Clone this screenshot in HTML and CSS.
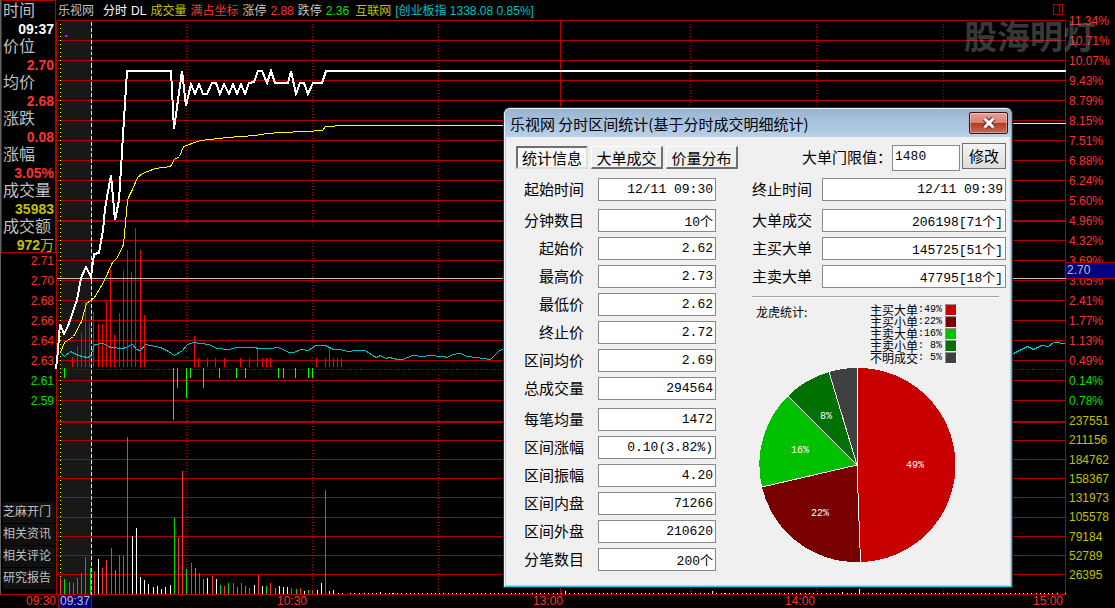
FILE: index.html
```
<!DOCTYPE html>
<html lang="zh-CN">
<head>
<meta charset="utf-8">
<title>乐视网 分时</title>
<link rel="stylesheet" href="styles.css">
</head>
<body>
<div class="terminal">
  <aside class="side">
    <dl class="quote">
      <dt>时间</dt><dd class="white">09:37</dd>
      <dt>价位</dt><dd>2.70</dd>
      <dt>均价</dt><dd>2.68</dd>
      <dt>涨跌</dt><dd>0.08</dd>
      <dt>涨幅</dt><dd>3.05%</dd>
      <dt>成交量</dt><dd class="gold">35983</dd>
      <dt>成交额</dt><dd class="gold">972<span class="unit">万</span></dd>
    </dl>
    <ul class="scale scale-left">
      <li>2.71</li><li>2.70</li><li>2.68</li><li>2.66</li><li>2.64</li><li>2.63</li>
      <li class="green">2.61</li><li class="green">2.59</li>
    </ul>
    <nav class="links">
      <button type="button">芝麻开门</button>
      <button type="button">相关资讯</button>
      <button type="button">相关评论</button>
      <button type="button">研究报告</button>
    </nav>
  </aside>

  <header class="top">
    <span class="name">乐视网</span>
    <span class="white">分时</span>
    <span class="white">DL</span>
    <span class="gold">成交量</span>
    <span class="red">满占坐标</span>
    <span>涨停</span>
    <span class="red">2.88</span>
    <span>跌停</span>
    <span class="green">2.36</span>
    <span class="gold sector">互联网</span>
    <span class="cyan">[创业板指 1338.08 0.85%]</span>
    <svg class="split" width="11" height="12" viewBox="0 0 11 12" shape-rendering="crispEdges"><path d="M.5 .5H9.500V10.500H.5ZM6.500 .5V10.500" fill="none" stroke="#b00000"/></svg>
  </header>

  <main class="chart">
    <svg class="plot" viewBox="56 20 1010 575" preserveAspectRatio="none" shape-rendering="crispEdges">
      <rect x="61" y="21" width="30" height="573" fill="#181818"/>
      <g transform="translate(.5 .5)" fill="none">
        <g stroke="#b00000">
          <path d="M56 20H1065M56 40H1065M56 60H1065M56 80H1065M56 100H1065M56 120H1065M56 140H1065M56 160H1065M56 180H1065M56 200H1065M56 220H1065M56 221H1065M56 240H1065M56 260H1065M56 280H1065M56 300H1065M56 320H1065M56 340H1065M56 360H1065M56 380H1065M56 400H1065M56 421H1065M56 422H1065M56 440H1065M56 459H1065M56 478H1065M56 497H1065M56 517H1065M56 536H1065M56 555H1065M56 574H1065M56 594H1065"/>
          <path d="M56 20V594M1065 20V594M560 20V594"/>
          <path d="M56 369H1065M186 23V594M312 23V594M438 23V594M690 23V594M816 23V594M943 23V594" stroke-dasharray="1 2"/>
        </g>
        <path d="M60 23V594" stroke="#ffff00" stroke-dasharray="1 3"/>
        <path stroke="#ff0000" d="M72 366V356M77 366V345M81 366V331M85 366V300M89 366V322M93 366V311M98 366V323M102 366V323M106 366V301M110 366V268M114 366V334M119 366V312M123 366V269M127 366V249M131 366V271M135 366V227M140 366V249M144 366V314M194 366V335M198 366V357M207 366V357M215 366V357M224 366V357M240 366V357M249 366V357M257 366V346M262 366V357M266 366V357M270 366V357M316 366V357M325 366V357M329 366V346M333 366V357M337 366V357M341 366V357"/>
        <path stroke="#00ff00" d="M64 367V377M173 367V419M177 367V387M186 367V397M190 367V377M203 367V387M219 367V377M236 367V377M245 367V377M278 367V377M283 367V377M295 367V377M308 367V377M312 367V377"/>
        <path stroke="#ff3030" d="M60 594V577M69 594V581M73 594V582M77 594V577M81 594V572M85 594V556M94 594V570M102 594V567M106 594V559M111 594V547M119 594V554M123 594V555M127 594V436M178 594V537M182 594V470M191 594V562M199 594V572M212 594V575M224 594V585M233 594V582M241 594V582M249 594V587M258 594V574M270 594V582M291 594V587M300 594V587M312 594V589M325 594V489"/>
        <path stroke="#00e000" d="M64 594V578M90 594V567M115 594V569M174 594V517M186 594V568M195 594V567M203 594V578M220 594V584M228 594V582M237 594V586M245 594V585M266 594V585M275 594V587M296 594V588M308 594V589"/>
        <path stroke="#fff" d="M98 594V558M132 594V535M136 594V527M140 594V576M144 594V579M148 594V583M153 594V586M157 594V585M161 594V588M165 594V586M170 594V584M207 594V577M216 594V578M254 594V584M262 594V585M279 594V585M283 594V586M287 594V586M304 594V590M317 594V589M321 594V582M329 594V590M333 594V589M338 594V592M342 594V592M350 594V592M354 594V592M359 594V592M380 594V591M392 594V592M565 594V590M712 594V590M724 594V592M834 594V592M842 594V591M859 594V588M1065 594V592"/>
        <path stroke="#fff" stroke-dasharray="1 3 1 3 1 3 1 3 1 4" d="M363 593H1060"/>
        <path d="M56 594H1065" stroke="#b00000"/>
        <polyline stroke="#00c0c0" points="61,353 64,356 70,351 78,355 86,357 90,356 94,344 103,343 110,347 123,348 132,344 136,349 140,350 145,344 160,347 168,351 174,355 182,350 187,344 193,342 208,344 217,348 228,349 237,347 252,347 260,348 270,348 277,347 283,349 288,352 293,352 301,349 308,350 315,345 325,345 333,349 340,349 347,351 357,350 365,350 372,355 376,357 380,355 385,358 389,357 397,359 402,359 412,355 423,356 428,355 443,356 447,357 452,354 460,353 467,356 483,358 490,359 498,351 503,348 700,352 1000,358 1013,353 1027,346 1033,349 1041,345 1048,346 1053,342 1065,343"/>
        <polyline stroke="#ffff00" points="60,352 64,342 73,336 81,321 86,303 94,297 103,282 112,262 117,257 123,244 127,200 128,197 132,189 137,177 142,173 155,168 170,166 174,159 179,156 183,146 200,140 227,137 255,135 267,133 280,132 306,131 322,130 325,126 344,125 1000,125 1013,123 1065,123"/>
        <path d="M56 278H1065" stroke="#c0c0c0"/>
        <path d="M91 21V594" stroke="#2020c0"/>
        <path d="M91 21V594" stroke="#e0e0e0" stroke-dasharray="4 2"/>
      </g>
      <polyline fill="none" stroke="#fff" stroke-width="2" points="56,369 58,350 60,324 64,334 68,326 77,300 81,278 86,267 91,277 94,254 99,253 103,230 105,209 107,197 111,175 115,220 119,200 127,71 171,71 174,129 182,71 186,106 191,84 195,94 199,84 203,94 207,94 212,83 216,83 220,94 224,84 229,94 233,84 237,94 241,84 245,94 249,83 254,82 258,71 262,71 267,83 271,71 275,83 288,83 291,71 296,94 300,83 304,83 308,94 313,83 322,83 326,71 1066,71"/>
      <rect x="65" y="35" width="2" height="2" fill="#ff00ff"/>
    </svg>
  </main>

  <aside class="axis">
    <ul class="scale">
      <li>11.34%</li><li>10.71%</li><li>10.07%</li><li>9.43%</li><li>8.79%</li><li>8.15%</li><li>7.51%</li><li>6.88%</li><li>6.24%</li><li>5.60%</li><li>4.96%</li><li>4.32%</li><li>3.69%</li><li>3.05%</li><li>2.41%</li><li>1.77%</li><li>1.13%</li><li>0.49%</li><li class="green">0.14%</li><li class="green">0.78%</li>
    </ul>
    <ul class="volume">
      <li>237551</li><li>211156</li><li>184762</li><li>158367</li><li>131973</li><li>105578</li><li>79184</li><li>52789</li><li>26395</li>
    </ul>
    <div class="price-tag">2.70</div>
  </aside>

  <footer class="times">
    <span>09:30</span><span class="cursor-time">09:37</span><span>10:30</span><span>13:00</span><span>14:00</span><span>15:00</span>
  </footer>

  <div class="watermark">股海明灯</div>

  <section class="dialog" role="dialog" aria-labelledby="dialog-title">
    <div class="titlebar">
      <h1 id="dialog-title">乐视网 分时区间统计(基于分时成交明细统计)</h1>
      <button type="button" class="close" aria-label="关闭"><svg width="16" height="14" viewBox="0 0 16 14"><path d="M3.500 2.500L12.500 11.500M12.500 2.500L3.500 11.500" stroke="#5a3030" stroke-width="5"/><path d="M3.500 2.500L12.500 11.500M12.500 2.500L3.500 11.500" stroke="#fff" stroke-width="3"/></svg></button>
    </div>
    <div class="client">
      <div class="tools">
        <div class="tabs" role="tablist">
          <button type="button" role="tab" aria-selected="true" class="tab active">统计信息</button>
          <button type="button" role="tab" class="tab">大单成交</button>
          <button type="button" role="tab" class="tab">价量分布</button>
        </div>
        <form class="limit">
          <label for="limit">大单门限值：</label>
          <input id="limit" value="1480">
          <button type="button">修改</button>
        </form>
      </div>
      <div class="columns">
        <div class="groups">
          <div class="group">
            <label class="row">起始时间<input readonly value="12/11 09:30"></label>
          </div>
          <div class="group">
            <label class="row">分钟数目<input readonly value="10个"></label>
            <label class="row">起始价<input readonly value="2.62"></label>
            <label class="row">最高价<input readonly value="2.73"></label>
            <label class="row">最低价<input readonly value="2.62"></label>
            <label class="row">终止价<input readonly value="2.72"></label>
            <label class="row">区间均价<input readonly value="2.69"></label>
            <label class="row">总成交量<input readonly value="294564"></label>
          </div>
          <div class="group">
            <label class="row">每笔均量<input readonly value="1472"></label>
            <label class="row">区间涨幅<input readonly value="0.10(3.82%)"></label>
            <label class="row">区间振幅<input readonly value="4.20"></label>
            <label class="row">区间内盘<input readonly value="71266"></label>
            <label class="row">区间外盘<input readonly value="210620"></label>
            <label class="row">分笔数目<input readonly value="200个"></label>
          </div>
        </div>
        <div class="right">
          <div class="groups wide">
            <div class="group">
              <label class="row">终止时间<input readonly value="12/11 09:39"></label>
            </div>
            <div class="group">
              <label class="row">大单成交<input readonly value="206198[71个]"></label>
              <label class="row">主买大单<input readonly value="145725[51个]"></label>
              <label class="row">主卖大单<input readonly value="47795[18个]"></label>
            </div>
          </div>
          <hr>
          <div class="summary">
            <h2>龙虎统计:</h2>
            <ul class="legend">
              <li>主买大单<b>:49%</b><i class="c1"></i></li>
              <li>主买小单<b>:22%</b><i class="c2"></i></li>
              <li>主卖大单<b>:16%</b><i class="c3"></i></li>
              <li>主卖小单<b>: 8%</b><i class="c4"></i></li>
              <li>不明成交<b>: 5%</b><i class="c5"></i></li>
            </ul>
          </div>
          <svg class="pie" width="196" height="196" viewBox="0 0 196 196">
            <g shape-rendering="crispEdges">
              <path fill="#c80000" d="M98 98V1A97 97 0 0 1 101 195Z"/>
              <path fill="#780000" d="M98 98L101 195A97 97 0 0 1 3 120Z"/>
              <path fill="#00c000" d="M98 98L3 120A97 97 0 0 1 29 29Z"/>
              <path fill="#007000" d="M98 98L29 29A97 97 0 0 1 70 5Z"/>
              <path fill="#404040" d="M98 98L70 5A97 97 0 0 1 98 1Z"/>
              <path d="M98.500 98V1M98 98L101.500 195M98 98L3 120M98 98L29 29M98 98L70 5" stroke="#fff" fill="none"/>
            </g>
            <g class="pie-text">
              <text x="156" y="101">49%</text>
              <text x="61" y="149">22%</text>
              <text x="41" y="86">16%</text>
              <text x="67" y="52">8%</text>
            </g>
          </svg>
        </div>
      </div>
    </div>
  </section>
</div>
</body>
</html>
```
FILE: styles.css
```
* { box-sizing: border-box; margin: 0; padding: 0; }
body { background: #000; color: #c0c0c0; font: 12px/18px "Liberation Sans", "Noto Sans CJK SC", sans-serif; }
ul { list-style: none; }
button, input { font: inherit; color: inherit; }

.terminal { position: relative; display: grid; grid-template-columns: 56px 1fr 49px; grid-template-rows: 20px 1fr 13px; min-height: 100vh; overflow: hidden; }
.white { color: #fff; }
.red { color: #ff3030; }
.gold { color: #c0c000; }
.cyan { color: #00c0c0; }

.side { grid-row: 1 / 3; display: flex; flex-direction: column; border-left: 1px solid #606060; border-bottom: 1px solid #b00000; }
.quote { border: 1px solid #b00000; height: 253px; padding-top: 1px; font-size: 16px; overflow: hidden; white-space: nowrap; }
.quote dt { padding-left: 1px; height: 18px; }
.quote dd { height: 18px; padding-right: 1px; text-align: right; font-size: 14px; font-weight: bold; color: #ff3030; }
.quote dd.white { color: #fff; }
.quote dd.gold { color: #c0c000; }
.unit { font-weight: normal; }
.scale { color: #ff3030; line-height: 20px; }
.scale .green, .green { color: #00e000; }
.scale-left { text-align: right; padding-right: 2px; margin-top: -2px; }
.links { margin-top: auto; padding: 0 1px 5px 2px; display: grid; gap: 1px; }
.links button { height: 21px; border: 0; background: #101010; text-align: left; line-height: 18px; padding-bottom: 2px; white-space: nowrap; }

.top { grid-column: 2 / 4; grid-row: 1; display: flex; gap: 4px; padding: 2px 51px 0 2px; line-height: 18px; white-space: nowrap; }
.name { margin-right: 5px; }
.sector { margin-left: 2px; }
.split { margin: 2px 0 0 auto; }

.chart { grid-column: 2; grid-row: 2; min-width: 0; position: relative; }
.plot { display: block; width: 100%; height: 100%; overflow: visible; }

.axis { grid-column: 3; grid-row: 1 / 3; position: relative; display: flex; flex-direction: column; padding: 11px 0 10px 3px; }
.volume { flex: 1; display: flex; flex-direction: column; justify-content: space-between; color: #c0c000; line-height: 19px; padding-top: 1px; }
.price-tag { position: absolute; left: 0; right: 0; top: 262px; height: 17px; padding-left: 1px; line-height: 15px; background: #000080; border: solid #b00000; border-width: 1px 0; }

.times { grid-column: 1 / 4; display: grid; grid-template-columns: 56px 36px 215fr 256fr 252fr 248fr 52px; line-height: 13px; color: #ff3030; text-align: right; }
.cursor-time { color: #c0c0c0; background: #000080; border: solid #b00000; border-width: 0 1px; margin-left: 2px; text-align: center; }

.watermark { position: absolute; right: 19px; top: 11px; font: bold 33px/48px "Noto Sans CJK SC", sans-serif; color: rgba(130, 130, 130, .45); }

.dialog { position: absolute; left: 504px; top: 108px; width: 508px; color: #000; background: #f0f0f0; border: 1px solid #30c0e8; border-left-color: #e8f4ff; border-top-color: #e8f4ff; border-radius: 6px 6px 0 0; box-shadow: inset 0 0 0 1px #b9d1ea, 0 0 0 1px #303030; font: 15px/23px "Noto Sans CJK SC", sans-serif; }
.titlebar { display: flex; justify-content: space-between; align-items: center; height: 28px; padding: 0 3px 0 5px; background: linear-gradient(#99b4d1, #b9d1ea); border-radius: 5px 5px 0 0; }
.titlebar h1 { font-size: 15px; font-weight: normal; }
.close { display: grid; place-items: center; width: 39px; height: 22px; border: 1px solid #401018; border-radius: 2px; background: linear-gradient(#e8a090, #d88070 48%, #b83820 50%, #c86858); box-shadow: inset 0 0 0 1px rgba(255, 255, 255, .35); }
.client { padding: 6px 5px 15px 11px; }
.tools { display: flex; justify-content: space-between; }
.tabs { display: flex; gap: 3px; padding-top: 3px; }
.tab { width: 72px; height: 23px; line-height: 19px; background: #f0f0f0; border: 1px solid #fff; border-right: 2px solid #707070; border-bottom: 2px solid #707070; }
.tab.active { background: #f8f8f8; border: 2px solid #e0e0e0; border-top-color: #707070; border-left-color: #707070; line-height: 18px; }
.limit { display: flex; align-items: flex-start; height: 28px; }
.limit label { line-height: 28px; }
.limit input { width: 68px; height: 26px; margin: 2px 2px 0 0; padding: 0 2px 4px; text-align: left; }
.limit button { width: 44px; height: 26px; line-height: 22px; border: 1px solid #707070; background: linear-gradient(#f4f4f4, #dcdcdc); }
input { border: 1px solid #888; background: #fff; color: #000; font: 13px "Liberation Mono", "Noto Sans CJK SC", monospace; text-align: right; padding: 0 2px; }

.columns { display: flex; justify-content: space-between; padding-top: 7px; }
.groups { display: grid; gap: 8px; width: 200px; }
.groups.wide { width: 100%; }
.group { display: grid; gap: 5px; }
.row { display: grid; grid-template-columns: 68px 118px; gap: 14px; height: 23px; text-align: right; line-height: 22px; }
.wide .row { grid-template-columns: 60px 1fr; gap: 10px; }
.row input { width: 100%; height: 23px; min-width: 0; }
.right { width: 254px; }
hr { margin: 8px 7px 0 0; border: 0; border-top: 1px solid #a0a0a0; border-bottom: 1px solid #fff; }
.summary { display: flex; padding: 6px 49px 0 4px; justify-content: space-between; font-size: 12px; }
.summary h2 { font-size: 12px; font-weight: normal; line-height: 15px; }
.legend li { display: flex; height: 12px; line-height: 12px; align-items: center; }
.legend b { font: 10px/12px "Liberation Mono", monospace; white-space: pre; }
.legend i { width: 12px; height: 12px; margin-left: 3px; border: 1px solid #fff; border-top-color: #909090; border-left-color: #909090; }
.c1 { background: #c80000; }
.c2 { background: #780000; }
.c3 { background: #00c000; }
.c4 { background: #007000; }
.c5 { background: #404040; }
.pie { display: block; margin: 3px 0 0 7px; }
.pie-text { fill: #fff; font: 10px "Liberation Mono", monospace; text-anchor: middle; }
```
